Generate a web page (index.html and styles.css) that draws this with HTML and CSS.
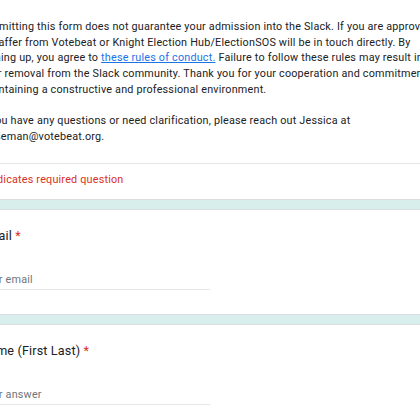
FILE: index.html
```html
<!DOCTYPE html>
<html lang="en">
<head>
<meta charset="utf-8">
<title>Slack sign-up form</title>
<link rel="stylesheet" href="styles.css">
</head>
<body>
<main class="form">
  <section class="card card-head">
    <div class="desc">
      <p>Submitting this form does not guarantee your admission into the Slack. If you are approved,<br>a staffer from Votebeat or Knight Election Hub/ElectionSOS will be in touch directly. By<br>signing up, you agree to <a href="#">these rules of conduct.</a> Failure to follow these rules may result in<br>your removal from the Slack community. Thank you for your cooperation and commitment to<br>maintaining a constructive and professional environment.</p>
      <p class="blank">&nbsp;</p>
      <p>If you have any questions or need clarification, please reach out Jessica at<br>jhuseman@votebeat.org.</p>
    </div>
    <div class="required-note">* Indicates required question</div>
  </section>
  <section class="card question">
    <div class="label">Email <span class="req">*</span></div>
    <div class="input">Your email</div>
  </section>
  <section class="card question">
    <div class="label">Name (First Last) <span class="req">*</span></div>
    <div class="input">Your answer</div>
  </section>
</main>
</body>
</html>
```
FILE: styles.css
```css
html, body {
  margin: 0;
  padding: 0;
}
body {
  background: #d7eeec;
  font-family: Roboto, "Liberation Sans", Arial, sans-serif;
  color: #202124;
  overflow: hidden;
}
.form {
  margin-left: -40px;
  margin-top: -12px;
  width: 520px;
  display: flex;
  flex-direction: column;
  gap: 9px;
}
.card {
  background: #fff;
  border: 1px solid #dadce0;
  border-radius: 7px;
}
.card-head {
  padding: 0;
}
.desc {
  padding: 30px 19px 18px 19px;
  font-size: 10.8px;
  line-height: 15.7px;
  letter-spacing: 0.2px;
  white-space: nowrap;
}
.desc p {
  margin: 0;
}
.desc a {
  color: #1a73e8;
  text-decoration: underline;
}
.required-note {
  border-top: 1px solid #e3e5e8;
  padding: 8px 19px 11px;
  font-size: 10.8px;
  line-height: 16px;
  color: #d93025;
  letter-spacing: 0.2px;
}
.question {
  padding: 17px 19px 24px;
}
.label {
  font-size: 12.6px;
  line-height: 18px;
  letter-spacing: 0.15px;
  color: #202124;
}
.req {
  color: #d93025;
}
.input {
  margin-top: 26px;
  width: 48%;
  box-sizing: border-box;
  padding-bottom: 0;
  border-bottom: 1px solid #e6e7e9;
  font-size: 10.8px;
  line-height: 18px;
  color: #70757a;
  letter-spacing: 0.2px;
}
```
